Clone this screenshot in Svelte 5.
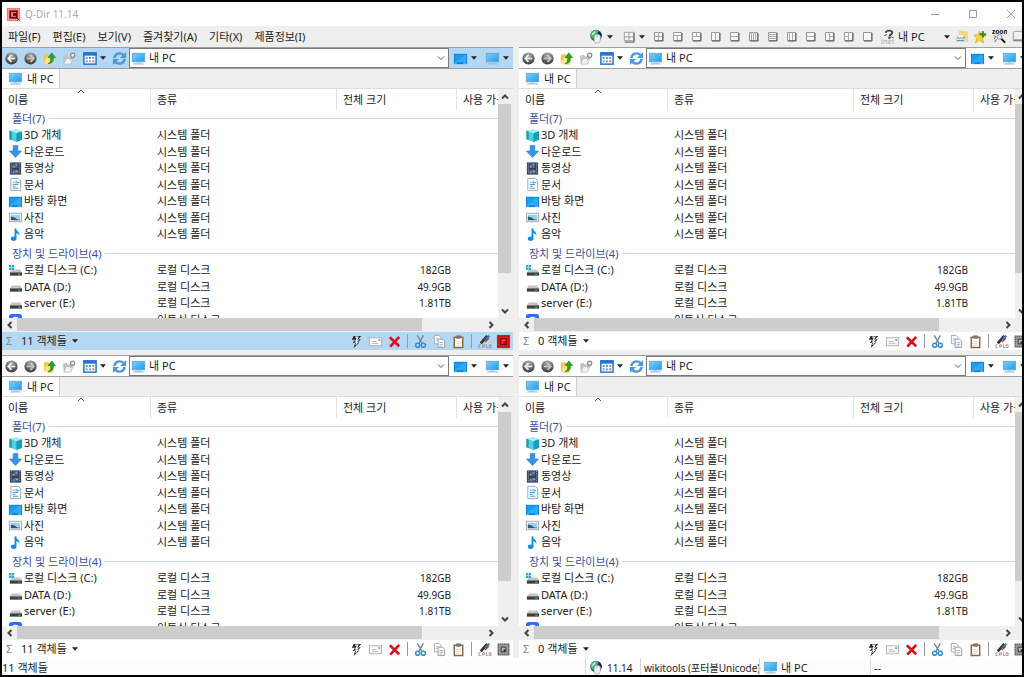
<script lang="ts">
  interface Item {
    name: string;
    kind: string;
    icon: string;
    size?: string;
  }

  interface Group {
    label: string;
    items: Item[];
  }

  const menus = ['파일(F)', '편집(E)', '보기(V)', '즐겨찾기(A)', '기타(X)', '제품정보(I)'];

  const groups: Group[] = [
    {
      label: '폴더(7)',
      items: [
        { name: '3D 개체', kind: '시스템 폴더', icon: 'cube' },
        { name: '다운로드', kind: '시스템 폴더', icon: 'download' },
        { name: '동영상', kind: '시스템 폴더', icon: 'film' },
        { name: '문서', kind: '시스템 폴더', icon: 'doc' },
        { name: '바탕 화면', kind: '시스템 폴더', icon: 'desktop' },
        { name: '사진', kind: '시스템 폴더', icon: 'photo' },
        { name: '음악', kind: '시스템 폴더', icon: 'music' }
      ]
    },
    {
      label: '장치 및 드라이브(4)',
      items: [
        { name: '로컬 디스크 (C:)', kind: '로컬 디스크', icon: 'drive-c', size: '182GB' },
        { name: 'DATA (D:)', kind: '로컬 디스크', icon: 'drive', size: '49.9GB' },
        { name: 'server (E:)', kind: '로컬 디스크', icon: 'drive', size: '1.81TB' },
        { name: '', kind: '이동식 디스크', icon: 'cloud' }
      ]
    }
  ];

  // divider lines inside the little window of each layout button
  const layouts = [
    { name: '4', d: 'M6.5 2v8M2 6.5h9' },
    { name: '3 아래', d: 'M2 5.5h9M6.5 6v4' },
    { name: '3 위', d: 'M2 6.5h9M6.5 2v4' },
    { name: '2 세로', d: 'M6.5 2v8' },
    { name: '2 가로', d: 'M2 6.5h9' },
    { name: '4 세로', d: 'M4.5 2v8M6.5 2v8M8.5 2v8' },
    { name: '4 가로', d: 'M2 4.5h9M2 6.5h9M2 8.5h9' },
    { name: '3 세로', d: 'M4.5 2v8M7.5 2v8' },
    { name: '3 가로', d: 'M2 6.5h9' },
    { name: '3 오른쪽', d: 'M6.5 2v8M7 6.5h4' },
    { name: '3 왼쪽', d: 'M6.5 2v8M2 6.5h4' },
    { name: '1', d: '' }
  ];

  const panes = [{ count: 11 }, { count: 0 }, { count: 11 }, { count: 0 }];

  let active = $state(0);
</script>

{#snippet icon(name: string)}
  <svg class="icon" viewBox="0 0 16 16" aria-hidden="true"><use href="#{name}" /></svg>
{/snippet}

{#snippet caret()}
  <svg class="caret" viewBox="0 0 7 4" aria-hidden="true"><path d="M0 0h7L3.500 4z" fill="#222" /></svg>
{/snippet}

<svg class="defs" aria-hidden="true">
  <defs>
    <linearGradient id="screen" x1="0" y1="0" x2="1" y2="1">
      <stop offset="0" stop-color="#7fd0fb" /><stop offset="1" stop-color="#1a9cf0" />
    </linearGradient>
    <radialGradient id="ball" cx=".5" cy=".25" r=".8">
      <stop offset="0" stop-color="#b4b4b4" /><stop offset=".6" stop-color="#626262" /><stop offset="1" stop-color="#2c2c2c" />
    </radialGradient>
    <symbol id="logo" viewBox="0 0 16 16">
      <rect x="1" y="1" width="14" height="14" fill="#f79a9a" />
      <rect x="1.500" y="1.500" width="13" height="13" fill="none" stroke="#e85050" stroke-dasharray="1 1" />
      <rect x="4.500" y="4.500" width="7" height="7" fill="#e58a8a" stroke="#7c0a0a" stroke-width="2" />
      <path d="M8 7h2v2H8zM11 11l3 3" fill="#5c0000" stroke="#5c0000" />
    </symbol>
    <symbol id="back" viewBox="0 0 16 16">
      <circle cx="8" cy="8" r="6.500" fill="url(#ball)" />
      <path d="M12 8H5M8 4.500L4.500 8 8 11.500" fill="none" stroke="#eee" stroke-width="1.800" />
    </symbol>
    <symbol id="forward" viewBox="0 0 16 16">
      <circle cx="8" cy="8" r="6.500" fill="url(#ball)" />
      <path d="M4 8h7M8 4.500L11.500 8 8 11.500" fill="none" stroke="#c8c8c8" stroke-width="1.800" />
    </symbol>
    <symbol id="up" viewBox="0 0 16 16">
      <path d="M2 4l4-1 1 1 5 1v9l-5 1-5-2z" fill="#f0c94a" />
      <path d="M2 13l3-6 8-1-2 8-4 1z" fill="#fbe38a" />
      <path d="M6.500 13.500c3-1.500 3-4 2.500-6.500H6.500L10.500 2l4 5H12c.5 4-1 6.500-5.500 6.500z" fill="#2aa52a" stroke="#157015" stroke-width=".6" />
    </symbol>
    <symbol id="newfolder" viewBox="0 0 16 16">
      <path d="M2 5l4-1 1 1.500h4v8L3 14z" fill="#c4c4c4" />
      <path d="M3 14l2.500-6H13l-3 6z" fill="#f4f4f4" stroke="#b0b0b0" stroke-width=".7" />
      <circle cx="12.500" cy="4.500" r="2.200" fill="#eee" stroke="#8a8a8a" stroke-width="1.300" />
      <path d="M11.500 7l-1.500 3" stroke="#999" />
    </symbol>
    <symbol id="views" viewBox="0 0 16 16">
      <rect x="2" y="2" width="13" height="12" fill="#fff" stroke="#2474d0" stroke-width="1.600" />
      <path d="M1.500 1.500h14v3.500h-14z" fill="#2474d0" />
      <path d="M4 6.500h2v2H4zM4 10h2v2H4zM7.500 10h2v2h-2zM11 6.500h2v2h-2z" fill="#5a94dc" />
      <path d="M7.500 6.500h2v2h-2z" fill="#4aa86a" />
      <path d="M11 10h2v2h-2z" fill="#d45a6a" />
    </symbol>
    <symbol id="refresh" viewBox="0 0 16 16">
      <path d="M2.500 7.500C3 2.500 9 1 12.500 4.500M13.500 8.500C13 13.500 7 15 3.500 11.500" fill="none" stroke="#4a98de" stroke-width="2.600" />
      <path d="M15 1v6.500H8.500zM1 15V8.500h6.500z" fill="#4a98de" />
    </symbol>
    <symbol id="pc" viewBox="0 0 16 16">
      <rect x="1.500" y="2.500" width="13" height="9" fill="url(#screen)" stroke="#63a9d3" />
      <path d="M6 12h4v1H6z" fill="#b9c5cc" />
      <path d="M3 13h10l1 1.500H2z" fill="#9fbdd0" />
    </symbol>
    <symbol id="desktop" viewBox="0 0 16 16">
      <rect x="1" y="3" width="14" height="11" fill="#0f7fdc" />
      <path d="M2 4h12v8H2z" fill="#189df5" />
      <path d="M2 12L12 4h2v8z" fill="#2eaafb" />
      <path d="M2 13h2M11 13h3" stroke="#8fd0ff" />
    </symbol>
    <symbol id="cube" viewBox="0 0 16 16">
      <path d="M1.500 3L9 1.500l6 2v9l-6 2.500-7.500-3z" fill="#4fd0e0" />
      <path d="M1.500 3L9 1.500l6 2-6 2z" fill="#a6eef4" />
      <path d="M9 5.500l6-2v9L9 15z" fill="#149fbb" />
      <path d="M1.500 3L4 4v9l-2.500-1z" fill="#2a98a8" />
    </symbol>
    <symbol id="download" viewBox="0 0 16 16">
      <path d="M5.500 1.500h5v6h4L8 14.500 1.500 7.500h4z" fill="#3694e6" stroke="#2579c8" stroke-width=".6" />
    </symbol>
    <symbol id="film" viewBox="0 0 16 16">
      <path d="M2 1.500h12v13H2z" fill="#333b49" />
      <path d="M3.500 2v12M12.500 2v12" stroke="#bcc5cc" stroke-dasharray="1 1" />
      <path d="M5 2.500h6v5H5zM5 9h6v4.500H5z" fill="#3461a8" />
      <path d="M5 5h2v2H5zM8 10h3v2H8z" fill="#d49a3a" />
      <path d="M8 3h2v2H8zM5 11h2v2H5z" fill="#7893c5" />
    </symbol>
    <symbol id="doc" viewBox="0 0 16 16">
      <path d="M3 1.500h8l2.500 2.500v10.500H3z" fill="#fff" stroke="#9ba5ac" />
      <path d="M5 5.500h2M8 6h4M5 8h6M5 10h3M5 12h6" stroke="#3a9bd8" />
      <path d="M8 4h2v3H8z" fill="#79c1ec" />
    </symbol>
    <symbol id="photo" viewBox="0 0 16 16">
      <rect x="1.500" y="3.500" width="13" height="9" fill="#fff" stroke="#9aa6ae" />
      <path d="M3 5h10v6H3z" fill="#9cd0ee" />
      <path d="M3 7l4 1 3 2h3v1H3z" fill="#31586f" />
    </symbol>
    <symbol id="music" viewBox="0 0 16 16">
      <path d="M8 1.500v10.500" stroke="#0f8fe8" stroke-width="2" />
      <ellipse cx="6" cy="12.500" rx="3" ry="2.300" fill="#0f8fe8" />
      <path d="M8 1.500c.5 3 5 3 4 8-.5-2-2-3-4-3z" fill="#0f8fe8" />
    </symbol>
    <symbol id="drive" viewBox="0 0 16 16">
      <path d="M4 7h9l2 3H2z" fill="#c4c4c4" />
      <path d="M2 10h13v3.500H2z" fill="#3d4040" />
      <path d="M11 12h2" stroke="#45e05a" />
    </symbol>
    <symbol id="drive-c" viewBox="0 0 16 16">
      <path d="M4 7h9l2 3H2z" fill="#c4c4c4" />
      <path d="M2 10h13v3.500H2z" fill="#3d4040" />
      <path d="M11 12h2" stroke="#45e05a" />
      <path d="M1 2h2.500v2.500H1zM4 2h2.500v2.500H4zM1 5h2.500v2.500H1zM4 5h2.500v2.500H4z" fill="#19aee8" />
    </symbol>
    <symbol id="cloud" viewBox="0 0 16 16">
      <rect x="1" y="2" width="14" height="13" rx="3" fill="#2f6bff" />
      <circle cx="8" cy="9" r="4" fill="#fff" />
    </symbol>
    <symbol id="globe" viewBox="0 0 16 16">
      <circle cx="7.500" cy="7" r="6.200" fill="#2a5fae" />
      <path d="M1.500 7c0-3 3-6 6-6 2 0 3 1 3 1L8 5 5.500 6l-1 5z" fill="#4fc04f" />
      <path d="M3 5l3-3 1 2-3 3z" fill="#c4ecf4" />
      <path d="M10 2c3 1 4 4 3.500 6L10 6z" fill="#0d2358" />
      <rect x="5.500" y="5.500" width="6.500" height="9.500" rx="3" fill="#f2f2f2" stroke="#999" stroke-width=".7" />
      <path d="M8.500 6v3" stroke="#aaa" />
    </symbol>
    <symbol id="inet" viewBox="0 0 16 16">
      <path d="M5 4c1-3 7-3 7 0 0 2-3 1.500-3 4" fill="none" stroke="#444" stroke-width="2" />
      <path d="M3.500 7l3-1M10.500 8l3 1.500M8 9h2v1H8z" fill="#333" stroke="#555" />
      <text x="0" y="15.500" font-size="8" fill="#aaa">inet</text>
    </symbol>
    <symbol id="printer" viewBox="0 0 16 16">
      <path d="M5 1.500h4l1 1h5v11H5z" fill="#f6d87c" />
      <path d="M4 8h7l2 3H2z" fill="#5a8fc4" />
      <path d="M1 10h12v4H1z" fill="#dfe4e8" />
      <path d="M3 12h8v1H3z" fill="#379a53" />
      <path d="M5 7h5v2H4z" fill="#fff" />
    </symbol>
    <symbol id="star" viewBox="0 0 16 16">
      <path d="M7 2l2 4 5 .5-4 3.500 1.500 5L7 12l-4.500 3L4 10 1 6.500 5.500 6z" fill="#fbd33c" stroke="#d7a21a" stroke-width=".7" />
      <path d="M10.500 2.500v6.500M7 5.700h7" stroke="#2c932c" stroke-width="2.200" />
    </symbol>
    <symbol id="zoomer" viewBox="0 0 16 16">
      <text x="0" y="5" font-size="7" font-weight="700" fill="#111">zoom</text>
      <circle cx="8" cy="8.500" r="2.500" fill="#f8f8f8" stroke="#888" />
      <path d="M10 10.500l4 4" stroke="#111" stroke-width="2" />
      <path d="M2 7l2 1-2 3M5 11l-2 3" fill="none" stroke="#555" />
    </symbol>
    <symbol id="tray" viewBox="0 0 16 16">
      <path d="M2.500 12.500v-9l1-1H15M2 12.500h13" fill="none" stroke="#999" />
      <path d="M3 11h12v2H3z" fill="#888" />
    </symbol>
    <symbol id="flash" viewBox="0 0 16 16">
      <path d="M5 2h8l-3 3.500h2.500L9.500 9H11l-6 6 1.500-5.500H4L6.500 6H3z" fill="#222" />
      <path d="M6.500 3.300h3L7.500 6.500h2L7 8.800h2L7 11.500" fill="none" stroke="#fff" stroke-width="1.200" />
    </symbol>
    <symbol id="mail" viewBox="0 0 16 16">
      <rect x="1.500" y="4" width="13" height="8.500" fill="#f8f8f8" stroke="#b0b0b0" />
      <path d="M4 8h5M4 10h7" stroke="#bbb" />
      <path d="M11 5.500h2v2h-2z" fill="#78a0c8" />
    </symbol>
    <symbol id="delete" viewBox="0 0 16 16">
      <path d="M3 3.500L13 13M13 3L3.500 13.500" stroke="#dc0f1c" stroke-width="2.800" />
    </symbol>
    <symbol id="cut" viewBox="0 0 16 16">
      <path d="M4.500 1.500l5.500 9M11 1.500L6 10.500" stroke="#6f8494" stroke-width="1.400" />
      <circle cx="5" cy="12" r="2.200" fill="none" stroke="#348fd0" stroke-width="1.600" />
      <circle cx="11" cy="12" r="2.200" fill="none" stroke="#348fd0" stroke-width="1.600" />
    </symbol>
    <symbol id="copy" viewBox="0 0 16 16">
      <path d="M2.500 1.500h5l2 2v7h-7z" fill="#fff" stroke="#a8a8a8" />
      <path d="M6.500 5.500h5l2 2v7h-7z" fill="#fff" stroke="#9b9b9b" />
      <path d="M4 5h3M4 7h2M8 9h4M8 11h4M8 13h3" stroke="#91b4d2" />
    </symbol>
    <symbol id="paste" viewBox="0 0 16 16">
      <path d="M3.500 3.500h9v11h-9z" fill="#fff" stroke="#94673a" stroke-width="1.600" />
      <path d="M5.500 1.500h5V5h-5z" fill="#777" />
      <path d="M5.500 8h5M5.500 10h5M5.500 12h4" stroke="#ddd" />
    </symbol>
    <symbol id="pen" viewBox="0 0 16 16">
      <path d="M4 10l7-8" stroke="#333" stroke-width="3" />
      <path d="M8 5.500l4-4.500 2 1.500L10 7z" fill="#2a7ac8" />
      <path d="M8.500 8.500l4-4" stroke="#d22" stroke-width="1.400" />
      <path d="M4 11.500H2v3h2M6 14.500v-3h2v2H6M10 11v3.500h2M13 11.500h2v3h-2z" fill="none" stroke="#999" />
    </symbol>
    <symbol id="frame" viewBox="0 0 16 16">
      <rect x="1.500" y="1.500" width="13" height="13" fill="#999" />
      <rect x="2.500" y="2.500" width="11" height="11" fill="none" stroke="#444" stroke-dasharray="1 1" />
      <path d="M5.500 5.500h5v5h-5z" fill="#bbb" stroke="#333" />
      <path d="M8 8h2v2H8z" fill="#222" />
    </symbol>
    <symbol id="frame-on" viewBox="0 0 16 16">
      <rect x="1" y="1" width="14" height="14" fill="#f01414" />
      <rect x="2.500" y="2.500" width="11" height="11" fill="none" stroke="#b00" stroke-dasharray="1 1" />
      <path d="M5 5h6v6H5z" fill="#f33" stroke="#700000" stroke-width="1.300" />
      <path d="M8 8h2v2H8z" fill="#800" />
    </symbol>
  </defs>
</svg>

<div class="window">
  <header class="titlebar">
    {@render icon('logo')}
    <span class="title">Q-Dir 11.14</span>
    <div class="controls">
      <button aria-label="최소화"><svg viewBox="0 0 10 10"><path d="M1 5.500h8" /></svg></button>
      <button aria-label="최대화"><svg viewBox="0 0 10 10"><path d="M1.500 1.500h7v7h-7z" /></svg></button>
      <button aria-label="닫기"><svg viewBox="0 0 10 10"><path d="M1 1l8 8M9 1L1 9" /></svg></button>
    </div>
  </header>

  <div class="menubar">
    <nav>
      {#each menus as m}
        <button class="menu">{m}</button>
      {/each}
    </nav>
    <div class="tools">
      <button class="drop" aria-label="웹">{@render icon('globe')}{@render caret()}</button>
      <button class="drop" aria-label="창 배치">
        <svg class="icon" viewBox="0 0 16 16"><path d="M3.500 3.500h10v9h-10zM8.500 3.500v9M3.500 8.500h10" class="grid-lines" /><path d="M14 4v10H4" class="shade" /></svg>
        {@render caret()}
      </button>
      <div class="layouts">
        {#each layouts as l}
          <button aria-label="배치 {l.name}">
            <svg viewBox="0 0 13 13">
              <path d="M2.500 2.500h8v8h-8z" fill="#f8f8f8" stroke="#999" />
              <path d={l.d} stroke="#aaa" fill="none" />
              <path d="M11 3v8H3" class="shade" />
            </svg>
          </button>
        {/each}
      </div>
      <button class="tool" aria-label="인터넷">{@render icon('inet')}</button>
      <div class="place">
        <select aria-label="위치"><option>내 PC</option></select>
        {@render caret()}
      </div>
      {#each ['printer', 'star', 'zoomer', 'tray'] as t}
        <button class="tool" aria-label={t}>{@render icon(t)}</button>
      {/each}
    </div>
  </div>

  <main class="panes">
    {#each panes as p, i}
      <!-- svelte-ignore a11y_no_noninteractive_element_interactions -->
      <section class="pane" class:active={active === i} aria-label="창 {i + 1}" onfocusin={() => (active = i)}>
        <div class="bar toolbar">
          <button class="tool" aria-label="뒤로">{@render icon('back')}</button>
          <button class="tool" aria-label="앞으로">{@render icon('forward')}</button>
          <button class="tool" aria-label="위로">{@render icon('up')}</button>
          <button class="tool" aria-label="새 폴더">{@render icon('newfolder')}</button>
          <button class="drop" aria-label="보기">{@render icon('views')}{@render caret()}</button>
          <button class="tool" aria-label="새로 고침">{@render icon('refresh')}</button>
          <div class="address">
            {@render icon('pc')}
            <input type="text" aria-label="주소" value="내 PC" />
            <button aria-label="주소 목록"><svg viewBox="0 0 8 8"><path d="M1 2.500L4 5.500 7 2.500" class="chev" /></svg></button>
          </div>
          <button class="drop" aria-label="바탕 화면">{@render icon('desktop')}{@render caret()}</button>
          <button class="drop" aria-label="내 PC">{@render icon('pc')}{@render caret()}</button>
        </div>

        <div class="tabs">
          <button class="tab">{@render icon('pc')}<span>내 PC</span></button>
        </div>

        <div class="body">
          <div class="list">
            <table>
              <colgroup><col class="c-name" /><col class="c-kind" /><col class="c-size" /><col /></colgroup>
              <thead>
                <tr>
                  <th class="sorted">이름<svg viewBox="0 0 8 5"><path d="M1 4l3-3 3 3" class="chev" /></svg></th>
                  <th>종류</th>
                  <th>전체 크기</th>
                  <th>사용 가능</th>
                </tr>
              </thead>
              {#each groups as g}
                <tbody>
                  <tr class="group"><th colspan="4"><div>{g.label}</div></th></tr>
                  {#each g.items as it}
                    <tr>
                      <td class="name"><div>{@render icon(it.icon)}{it.name}</div></td>
                      <td>{it.kind}</td>
                      <td class="size">{it.size ?? ''}</td>
                      <td></td>
                    </tr>
                  {/each}
                </tbody>
              {/each}
            </table>
          </div>
          <div class="vscroll">
            <button aria-label="위로 스크롤"><svg viewBox="0 0 8 8"><path d="M1 5.500L4 2.500 7 5.500" class="arrow" /></svg></button>
            <div class="track"><div class="thumb"></div></div>
            <button aria-label="아래로 스크롤"><svg viewBox="0 0 8 8"><path d="M1 2.500L4 5.500 7 2.500" class="arrow" /></svg></button>
          </div>
        </div>
        <div class="hscroll">
          <button aria-label="왼쪽 스크롤"><svg viewBox="0 0 8 8"><path d="M5.500 1L2.500 4 5.500 7" class="arrow" /></svg></button>
          <div class="track"><div class="thumb"></div></div>
          <button aria-label="오른쪽 스크롤"><svg viewBox="0 0 8 8"><path d="M2.500 1L5.500 4 2.500 7" class="arrow" /></svg></button>
        </div>

        <div class="bar status">
          <span class="sigma">Σ</span>
          <button class="count">{p.count} 객체들{@render caret()}</button>
          <div class="actions">
            <button class="tool" aria-label="빠른 실행">{@render icon('flash')}</button>
            <button class="tool" aria-label="메일">{@render icon('mail')}</button>
            <button class="tool" aria-label="삭제">{@render icon('delete')}</button>
            <i></i>
            <button class="tool" aria-label="잘라내기">{@render icon('cut')}</button>
            <button class="tool" aria-label="복사">{@render icon('copy')}</button>
            <button class="tool" aria-label="붙여넣기">{@render icon('paste')}</button>
            <i></i>
            <button class="tool" aria-label="색상">{@render icon('pen')}</button>
            <button class="tool" aria-label="창 선택">{@render icon(active === i ? 'frame-on' : 'frame')}</button>
          </div>
        </div>
      </section>
    {/each}
  </main>

  <footer>
    <span class="total">11 객체들</span>
    <span class="version">{@render icon('globe')}11.14</span>
    <span class="user">wikitools (포터블Unicode)</span>
    <span class="where">{@render icon('pc')}내 PC</span>
    <span class="rest">--</span>
  </footer>
</div>

<style>
  :global(body) {
    font: 11px/16px 'Noto Sans', 'Noto Sans CJK KR', sans-serif;
    color: #222;
  }
  button,
  input,
  select {
    font: inherit;
    color: inherit;
    background: none;
    border: 0;
    padding: 0;
    margin: 0;
    appearance: none;
  }
  button {
    display: flex;
    align-items: center;
    justify-content: center;
    flex: none;
    white-space: nowrap;
  }
  svg {
    display: block;
    flex: none;
  }
  .defs {
    position: absolute;
    width: 0;
    height: 0;
  }
  .icon {
    width: 15px;
    height: 15px;
  }
  .caret {
    width: 6px;
    height: 4px;
  }
  .window {
    box-sizing: border-box;
    height: 100vh;
    border: 2px solid #000;
    background: #efefef;
    display: flex;
    flex-direction: column;
    overflow: hidden;
  }
  .titlebar {
    height: 24px;
    flex: none;
    display: flex;
    align-items: center;
    gap: 4px;
    padding-left: 4px;
    background: #fff;
    color: #aaa;
  }
  .title,
  .size,
  .user,
  .version {
    font-size: 10px;
  }
  .controls {
    display: flex;
    margin-left: auto;
    margin-right: -8px;
  }
  .controls button {
    width: 38px;
    height: 24px;
  }
  .controls svg {
    width: 10px;
    height: 10px;
    fill: none;
    stroke: #999;
  }
  .menubar {
    height: 21px;
    flex: none;
    display: flex;
    align-items: center;
    justify-content: space-between;
  }
  nav {
    display: flex;
  }
  .menu {
    padding: 0 6px;
  }
  .tools {
    display: flex;
    align-items: center;
    margin-right: -6px;
  }
  .tool {
    width: 19px;
    height: 19px;
  }
  .drop {
    width: 32px;
    height: 19px;
    gap: 3px;
    padding-left: 4px;
    justify-content: flex-start;
  }
  .layouts {
    display: flex;
    margin-right: 2px;
  }
  .layouts button {
    width: 19px;
    height: 19px;
  }
  .layouts svg {
    width: 13px;
    height: 13px;
  }
  .grid-lines {
    fill: #f8f8f8;
    stroke: #999;
  }
  .shade {
    fill: none;
    stroke: #555;
  }
  .place {
    display: flex;
    align-items: center;
    box-sizing: border-box;
    width: 54px;
    padding-right: 2px;
  }
  .place select {
    flex: 1;
    min-width: 0;
  }
  .panes {
    flex: 1;
    min-height: 0;
    width: calc(100% + 8px);
    display: grid;
    grid-template: 1fr 1fr / 1fr 1fr;
    gap: 5px 6px;
  }
  .pane {
    display: flex;
    flex-direction: column;
    min-width: 0;
    min-height: 0;
    border-top: 1px solid #a0a0a0;
  }
  .bar {
    display: flex;
    align-items: center;
    background: #fff;
    flex: none;
  }
  .active .bar {
    background: #b4d7f3;
  }
  .toolbar {
    height: 20px;
    border-bottom: 1px solid #a0a0a0;
  }
  .address {
    flex: 1;
    min-width: 0;
    height: 20px;
    box-sizing: border-box;
    border: 1px solid #7a7a7a;
    background: #fff;
    display: flex;
    align-items: center;
    gap: 3px;
    padding: 0 3px 0 1px;
  }
  .address input {
    flex: 1;
    min-width: 0;
    height: 16px;
  }
  .address button svg,
  .vscroll svg,
  .hscroll svg {
    width: 8px;
    height: 8px;
  }
  .chev {
    fill: none;
    stroke: #555;
  }
  .arrow {
    fill: none;
    stroke: #444;
    stroke-width: 2;
  }
  .tabs {
    flex: none;
    display: flex;
    border-bottom: 1px solid #dcdcdc;
  }
  .tab {
    height: 19px;
    gap: 4px;
    padding: 0 5px 0 6px;
    background: #fff;
    border-right: 1px solid #d0d0d0;
  }
  .body {
    flex: 1;
    min-height: 0;
    display: flex;
    padding-right: 2px;
  }
  .list {
    flex: 1;
    min-width: 0;
    overflow: hidden;
    background: #fff;
  }
  table {
    width: 100%;
    table-layout: fixed;
    border-spacing: 0;
  }
  .c-name {
    width: 149px;
  }
  .c-kind {
    width: 186px;
  }
  .c-size {
    width: 120px;
  }
  th,
  td {
    padding: 0 0 0 6px;
    height: 16px;
    line-height: 16px;
    text-align: left;
    font-weight: 400;
    white-space: nowrap;
    overflow: hidden;
  }
  tbody tr:nth-child(odd) td {
    height: 17px;
  }
  thead th {
    height: 21px;
    background: linear-gradient(#e2e2e2, #e2e2e2) right / 1px 100% no-repeat;
  }
  thead th:last-child {
    background: none;
  }
  .sorted {
    position: relative;
  }
  .sorted svg {
    position: absolute;
    top: 0;
    left: 50%;
    width: 8px;
    height: 5px;
  }
  .group th {
    height: 17px;
    padding-left: 10px;
    color: #3c4f9e;
  }
  tbody + tbody .group th {
    padding-top: 3px;
  }
  .group div {
    display: flex;
    align-items: center;
    gap: 4px;
  }
  .group div::after {
    content: '';
    flex: 1;
    height: 1px;
    background: #cdd5f0;
  }
  .name div {
    display: flex;
    align-items: center;
    gap: 1px;
  }
  .size {
    padding-right: 6px;
    text-align: right;
  }
  .vscroll {
    width: 13px;
    display: flex;
    flex-direction: column;
  }
  .vscroll button {
    height: 15px;
  }
  .vscroll .track,
  .hscroll .track {
    flex: 1;
  }
  .vscroll .thumb {
    height: 85%;
    background: #cdcdcd;
  }
  .hscroll {
    height: 14px;
    flex: none;
    display: flex;
    padding-right: 15px;
  }
  .hscroll button {
    width: 15px;
  }
  .hscroll .thumb {
    width: 87%;
    height: 13px;
    background: #cdcdcd;
  }
  .status {
    height: 18px;
    padding-left: 4px;
  }
  .sigma {
    width: 15px;
    color: #888;
  }
  .count {
    gap: 5px;
  }
  .actions {
    display: flex;
    align-items: center;
    margin-left: auto;
  }
  .actions i {
    width: 1px;
    height: 14px;
    margin: 0 3px;
    background: #999;
  }
  footer {
    height: 17px;
    flex: none;
    display: flex;
    align-items: center;
    background: #fdfdfd;
  }
  footer span {
    display: flex;
    align-items: center;
    box-sizing: border-box;
    height: 17px;
    padding: 2px 0 0 3px;
    gap: 3px;
    border-left: 1px solid #d9d9d9;
    white-space: nowrap;
  }
  footer .total {
    flex: 1;
    padding-left: 0;
    border-left: 0;
  }
  .version {
    width: 55px;
  }
  .user {
    width: 119px;
  }
  .where {
    width: 111px;
  }
  .rest {
    width: 152px;
  }
</style>
